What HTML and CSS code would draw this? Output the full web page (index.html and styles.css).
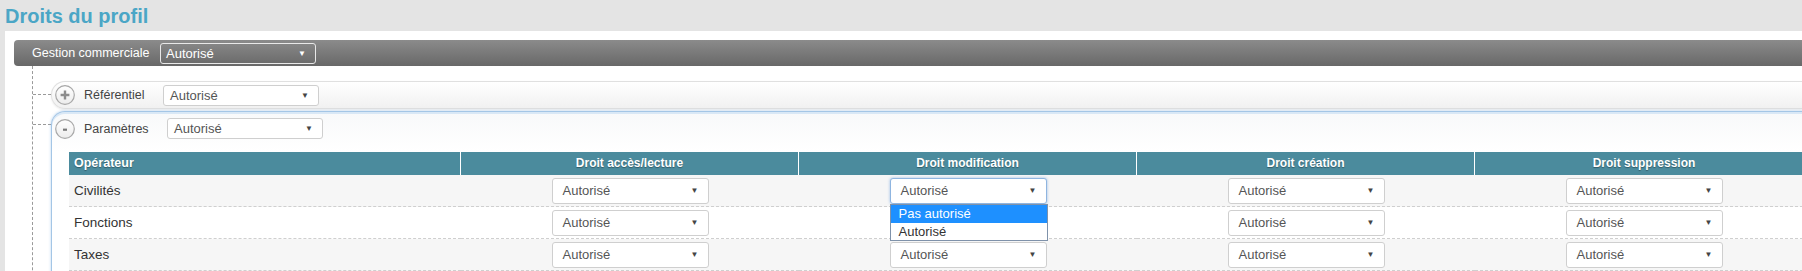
FILE: index.html
```html
<!DOCTYPE html>
<html lang="fr">
<head>
<meta charset="utf-8">
<title>Droits du profil</title>
<link rel="stylesheet" href="styles.css">
</head>
<body>
<h1 class="title">Droits du profil</h1>
<div class="panel">
  <div class="module-bar">
    <span class="module-label">Gestion commerciale</span>
    <div class="fsel fsel-dark"><span>Autorisé</span><span class="arrow">▼</span></div>
  </div>
  <div class="tree">
    <div class="branch">
      <span class="connector"></span>
      <div class="pill">
        <svg class="toggle" width="20" height="20" viewBox="0 0 20 20">
          <defs><linearGradient id="g1" x1="0" y1="0" x2="0" y2="1"><stop offset="0" stop-color="#ffffff"/><stop offset="1" stop-color="#ececec"/></linearGradient></defs>
          <circle cx="10" cy="10" r="9.3" fill="url(#g1)" stroke="#a8a8a8" stroke-width="1.2"/>
          <path d="M10 5.6V14.4M5.6 10H14.4" stroke="#8c8c8c" stroke-width="2.4"/>
        </svg>
        <span class="node-label">Référentiel</span>
        <div class="fsel fsel-sm"><span>Autorisé</span><span class="arrow">▼</span></div>
      </div>
    </div>
    <div class="branch">
      <span class="connector"></span>
      <div class="group">
        <div class="group-head">
          <svg class="toggle" width="20" height="20" viewBox="0 0 20 20">
            <defs><linearGradient id="g2" x1="0" y1="0" x2="0" y2="1"><stop offset="0" stop-color="#ffffff"/><stop offset="1" stop-color="#ececec"/></linearGradient></defs>
            <circle cx="10" cy="10" r="9.3" fill="url(#g2)" stroke="#a8a8a8" stroke-width="1.2"/>
            <rect x="8" y="9.6" width="4" height="2.2" fill="#7a7a7a"/>
          </svg>
          <span class="node-label">Paramètres</span>
          <div class="fsel fsel-sm"><span>Autorisé</span><span class="arrow">▼</span></div>
        </div>
        <div class="grid">
          <div class="hcell hcell-first">Opérateur</div>
          <div class="hcell">Droit accès/lecture</div>
          <div class="hcell">Droit modification</div>
          <div class="hcell">Droit création</div>
          <div class="hcell hcell-last">Droit suppression</div>

          <div class="cell cell-name odd">Civilités</div>
          <div class="cell odd"><div class="fsel"><span>Autorisé</span><span class="arrow">▼</span></div></div>
          <div class="cell odd">
            <div class="fsel-wrap">
              <div class="fsel fsel-focus"><span>Autorisé</span><span class="arrow">▼</span></div>
              <ul class="dropdown">
                <li class="opt opt-active">Pas autorisé</li>
                <li class="opt">Autorisé</li>
              </ul>
            </div>
          </div>
          <div class="cell odd"><div class="fsel"><span>Autorisé</span><span class="arrow">▼</span></div></div>
          <div class="cell odd"><div class="fsel"><span>Autorisé</span><span class="arrow">▼</span></div></div>

          <div class="cell cell-name">Fonctions</div>
          <div class="cell"><div class="fsel"><span>Autorisé</span><span class="arrow">▼</span></div></div>
          <div class="cell"><div class="fsel"><span>Autorisé</span><span class="arrow">▼</span></div></div>
          <div class="cell"><div class="fsel"><span>Autorisé</span><span class="arrow">▼</span></div></div>
          <div class="cell"><div class="fsel"><span>Autorisé</span><span class="arrow">▼</span></div></div>

          <div class="cell cell-name odd">Taxes</div>
          <div class="cell odd"><div class="fsel"><span>Autorisé</span><span class="arrow">▼</span></div></div>
          <div class="cell odd"><div class="fsel"><span>Autorisé</span><span class="arrow">▼</span></div></div>
          <div class="cell odd"><div class="fsel"><span>Autorisé</span><span class="arrow">▼</span></div></div>
          <div class="cell odd"><div class="fsel"><span>Autorisé</span><span class="arrow">▼</span></div></div>
        </div>
      </div>
    </div>
  </div>
</div>
</body>
</html>
```
FILE: styles.css
```css
html, body {
  margin: 0;
  padding: 0;
  overflow: hidden;
  height: 271px;
}
body {
  background: #e4e4e4;
  font-family: "Liberation Sans", Arial, sans-serif;
  color: #333;
}
.title {
  margin: 0;
  height: 31px;
  box-sizing: border-box;
  padding: 4px 0 0 5px;
  font-size: 20px;
  line-height: 24px;
  font-weight: bold;
  color: #4ba6c6;
}
.panel {
  margin-left: 5px;
  height: 240px;
  background: #fff;
  overflow: hidden;
  padding: 9px 0 0 9px;
  box-sizing: border-box;
}
.module-bar {
  width: 1900px;
  height: 26px;
  box-sizing: border-box;
  display: flex;
  align-items: center;
  padding-left: 18px;
  background: linear-gradient(#8b8b8b, #686868);
  border-radius: 4px 0 0 4px;
}
.module-label {
  color: #fff;
  font-size: 12.5px;
  width: 128px;
}
.fsel {
  width: 157px;
  height: 26px;
  box-sizing: border-box;
  display: flex;
  align-items: center;
  justify-content: space-between;
  padding: 0 9px 0 10px;
  background: #fff;
  border: 1px solid #cfcfcf;
  border-radius: 3px;
  font-size: 13px;
  color: #555;
}
.arrow {
  font-size: 8px;
  color: #444;
}
.fsel-dark {
  width: 156px;
  height: 21px;
  background: transparent;
  border-color: #e8e8e8;
  color: #fff;
  padding-left: 5px;
}
.fsel-dark .arrow {
  color: #fff;
}
.fsel-sm {
  width: 156px;
  height: 21px;
  padding-left: 6px;
}
.tree {
  margin-left: 18px;
  border-left: 1px dashed #9a9a9a;
  padding-top: 15px;
  height: 300px;
}
.branch {
  display: flex;
  align-items: flex-start;
}
.branch + .branch {
  margin-top: 2px;
}
.connector {
  width: 18px;
  flex: none;
  border-top: 1px dashed #9a9a9a;
  margin-top: 13px;
}
.pill {
  width: 1900px;
  height: 28px;
  box-sizing: border-box;
  display: flex;
  align-items: center;
  padding-left: 3px;
  border: 1px solid #e0e0e0;
  border-right: none;
  border-radius: 14px 0 0 14px;
  background: linear-gradient(#ffffff, #f1f1f1);
  box-shadow: 0 1px 2px rgba(0,0,0,0.08);
}
.toggle {
  flex: none;
  display: block;
}
.node-label {
  font-size: 12.5px;
  color: #444;
  margin-left: 9px;
}
.pill .node-label {
  width: 79px;
}
.group {
  width: 1900px;
  height: 300px;
  box-sizing: border-box;
  border-top: 1px solid #a4c6e6;
  border-left: 1px solid #a4c6e6;
  border-radius: 14px 0 0 0;
  box-shadow: 0 0 3px rgba(120,170,220,0.55), inset 0 2px 0 #d9e8f6;
  background: linear-gradient(#f8f9fa 0, #ffffff 40px);
  padding-left: 17px;
}
.group-head {
  height: 33px;
  display: flex;
  align-items: center;
  margin-left: -14px;
}
.group-head .node-label {
  width: 83px;
}
.grid {
  margin-top: 7px;
  display: grid;
  grid-template-columns: 392px 338px 338px 338px 338px;
  grid-auto-rows: 32px;
  grid-template-rows: 23px;
}
.hcell {
  background: #4b8b9d;
  color: #fff;
  font-size: 12px;
  font-weight: bold;
  text-align: center;
  line-height: 23px;
  border-right: 1px solid #fff;
  text-shadow: 0 1px 1px rgba(0,0,0,0.35);
}
.hcell-first {
  text-align: left;
  padding-left: 5px;
  font-size: 12.5px;
}
.hcell-last {
  border-right: none;
}
.cell {
  background: #fff;
  border-bottom: 1px dashed #cfcfcf;
  display: flex;
  align-items: center;
  justify-content: center;
  box-sizing: border-box;
}
.cell.odd {
  background: #f6f6f6;
}
.cell-name {
  justify-content: flex-start;
  padding-left: 5px;
  font-size: 13.5px;
  color: #333;
}
.fsel-wrap {
  position: relative;
}
.fsel-focus {
  border-color: #8fb5e0;
  box-shadow: 0 0 3px rgba(90,150,220,0.6);
}
.dropdown {
  position: absolute;
  left: 0;
  top: 26px;
  width: 158px;
  margin: 0;
  padding: 0;
  list-style: none;
  background: #fff;
  border: 1px solid #7f92aa;
  box-sizing: border-box;
  z-index: 5;
}
.opt {
  height: 17px;
  line-height: 17px;
  padding-left: 8px;
  font-size: 13px;
  color: #333;
}
.opt-active {
  background: #1e90ff;
  color: #fff;
  height: 18px;
  line-height: 18px;
}
```
